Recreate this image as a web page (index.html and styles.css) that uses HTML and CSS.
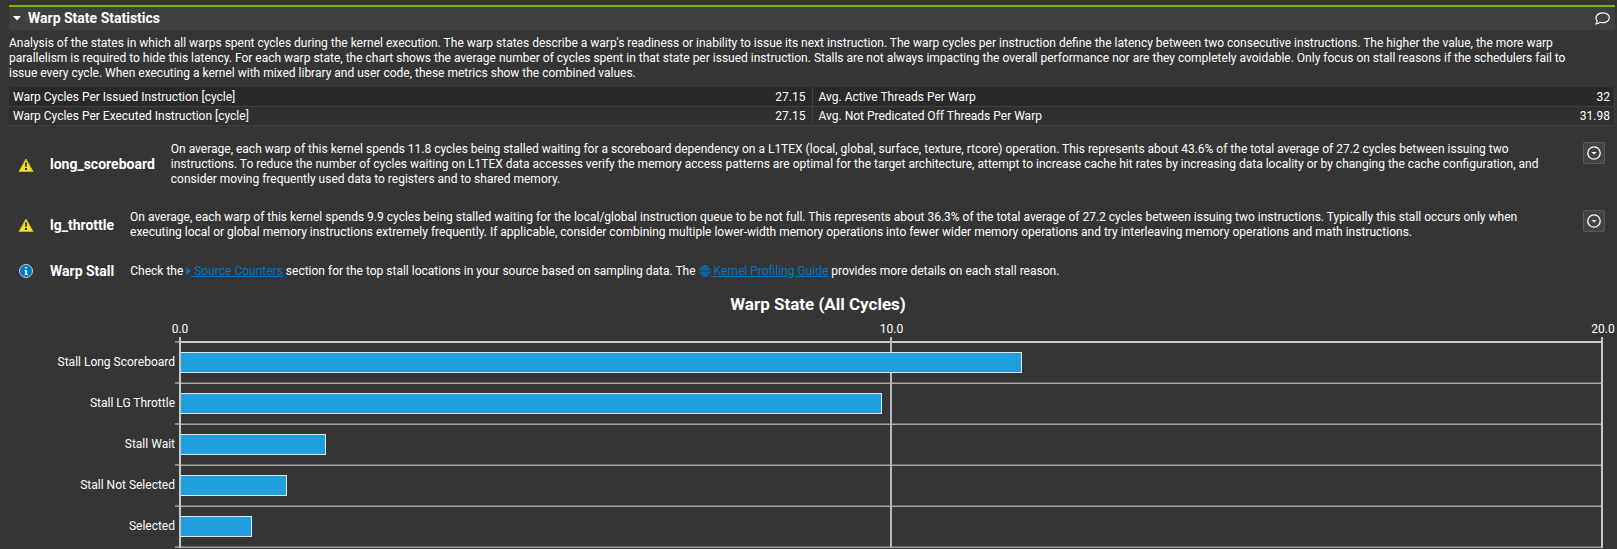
FILE: index.html
```html
<!DOCTYPE html>
<html lang="en">
<head>
<meta charset="utf-8">
<meta name="viewport" content="width=device-width, initial-scale=1">
<title>Warp State Statistics</title>
<link rel="stylesheet" href="styles.css">
</head>
<body>
<section class="section">
	<header class="section-head">
		<button class="toggle" aria-expanded="true">
			<svg width="8" height="5" viewBox="0 0 8 5"><path d="M0 0h8L4 4.5z" fill="#fff"/></svg>
			Warp State Statistics
		</button>
		<button class="comment" aria-label="Comments">
			<svg width="15" height="13" viewBox="0 0 15 13"><path d="M1 12 2.3 9.2C-.8 5.5 2 .8 7.800.8c3.7 0 6.5 2.1 6.5 4.9s-2.8 4.9-6.5 4.9c-1 0-1.9-.1-2.7-.4C4.1 11.3 2.6 12 1 12z" fill="none" stroke="#fff" stroke-width="1.2"/></svg>
		</button>
	</header>

	<p class="desc">Analysis of the states in which all warps spent cycles during the kernel execution. The warp states describe a warp's readiness or inability to issue its next instruction. The warp cycles per instruction define the latency between two consecutive instructions. The higher the value, the more warp parallelism is required to hide this latency. For each warp state, the chart shows the average number of cycles spent in that state per issued instruction. Stalls are not always impacting the overall performance nor are they completely avoidable. Only focus on stall reasons if the schedulers fail to issue every cycle. When executing a kernel with mixed library and user code, these metrics show the combined values.</p>

	<table class="metrics">
		<tr>
			<th>Warp Cycles Per Issued Instruction [cycle]</th><td>27.15</td>
			<th>Avg. Active Threads Per Warp</th><td>32</td>
		</tr>
		<tr>
			<th>Warp Cycles Per Executed Instruction [cycle]</th><td>27.15</td>
			<th>Avg. Not Predicated Off Threads Per Warp</th><td>31.98</td>
		</tr>
	</table>

	<div class="rules">
		<div class="rule">
			<svg class="mark" width="16" height="16" viewBox="0 0 16 16"><path d="M8 2 15 14.5H1z" fill="#f5e02f" stroke="#c4b128" stroke-linejoin="round"/><path d="M7 5.5h2L8.6 10H7.4zM7 11h2v2H7z" fill="#222"/></svg>
			<b>long_scoreboard</b>
			<p>On average, each warp of this kernel spends 11.8 cycles being stalled waiting for a scoreboard dependency on a L1TEX (local, global, surface, texture, rtcore) operation. This represents about 43.6% of the total average of 27.2 cycles between issuing two instructions. To reduce the number of cycles waiting on L1TEX data accesses verify the memory access patterns are optimal for the target architecture, attempt to increase cache hit rates by increasing data locality or by changing the cache configuration, and consider moving frequently used data to registers and to shared memory.</p>
			<button class="more" aria-label="Show details"><svg width="14" height="14" viewBox="0 0 14 14"><circle cx="7" cy="7" r="6.2" fill="none" stroke="#fff" stroke-width="1.3"/><path d="M4.5 6h5L7 8.5z" fill="#fff"/></svg></button>
		</div>
		<div class="rule">
			<svg class="mark" width="16" height="16" viewBox="0 0 16 16"><path d="M8 2 15 14.5H1z" fill="#f5e02f" stroke="#c4b128" stroke-linejoin="round"/><path d="M7 5.5h2L8.6 10H7.4zM7 11h2v2H7z" fill="#222"/></svg>
			<b>lg_throttle</b>
			<p>On average, each warp of this kernel spends 9.9 cycles being stalled waiting for the local/global instruction queue to be not full. This represents about 36.3% of the total average of 27.2 cycles between issuing two instructions. Typically this stall occurs only when executing local or global memory instructions extremely frequently. If applicable, consider combining multiple lower-width memory operations into fewer wider memory operations and try interleaving memory operations and math instructions.</p>
			<button class="more" aria-label="Show details"><svg width="14" height="14" viewBox="0 0 14 14"><circle cx="7" cy="7" r="6.2" fill="none" stroke="#fff" stroke-width="1.3"/><path d="M4.5 6h5L7 8.5z" fill="#fff"/></svg></button>
		</div>
		<div class="rule">
			<svg class="mark" width="16" height="16" viewBox="0 0 16 16"><circle cx="8" cy="8" r="6.5" fill="#0078d0" stroke="#ccc"/><path d="M7 4h2v1.5H7zM6.500 7H9v4h1v1H6.500v-1h.8V8h-.8z" fill="#fff"/></svg>
			<b>Warp Stall</b>
			<p>Check the <a href="#source"><svg width="5" height="8" viewBox="0 0 5 8"><path d="M.5 0v8l4-4z" fill="#0078c8"/></svg> Source Counters</a> section for the top stall locations in your source based on sampling data. The <a href="#guide"><svg class="globe" width="12" height="12" viewBox="0 0 12 12"><path d="M6 .8a5.2 5.2 0 1 0 0 10.4A5.2 5.2 0 1 0 6 .8zM6 .8c-3 2.5-3 7.900 0 10.400 3-2.500 3-7.900 0-10.400zM6 .8v10.400M1.300 4h9.400M1.300 8h9.400" fill="none" stroke="#0078c8"/></svg> Kernel Profiling Guide</a> provides more details on each stall reason.</p>
		</div>
	</div>

	<div class="chart">
		<h2>Warp State (All Cycles)</h2>
		<div class="scale"><span>0.0</span><span>10.0</span><span>20.0</span></div>
		<div class="row top"><span></span><i></i><div class="track"></div></div>
		<div class="row"><span>Stall Long Scoreboard</span><i></i><div class="track"><div class="bar" style="width:59.2%"></div></div></div>
		<div class="row"><span>Stall LG Throttle</span><i></i><div class="track"><div class="bar" style="width:49.35%"></div></div></div>
		<div class="row"><span>Stall Wait</span><i></i><div class="track"><div class="bar" style="width:10.2%"></div></div></div>
		<div class="row"><span>Stall Not Selected</span><i></i><div class="track"><div class="bar" style="width:7.45%"></div></div></div>
		<div class="row"><span>Selected</span><i></i><div class="track"><div class="bar" style="width:5%"></div></div></div>
	</div>
</section>
</body>
</html>
```
FILE: styles.css
```css
*{box-sizing: border-box;}
body{
	margin: 0;
	padding: 5px 2px 0 9px;
	font: 12px/15px Roboto, sans-serif;
	color: #fff;
	background: #353535;
}
p{margin: 0;}
button{
	padding: 0;
	border: 0;
	color: inherit;
	font: inherit;
	background: none;
	cursor: pointer;
}
svg{display: block;}

.section-head{
	display: flex;
	align-items: center;
	justify-content: space-between;
	height: 25px;
	padding: 0 5px 1px 4px;
	border-top: 2px solid #76b900;
	background: #3f3f3f;
}
.toggle{
	display: flex;
	align-items: center;
	gap: 7px;
	font-size: 14px;
	font-weight: bold;
}
.desc{
	padding: 6px 20px 6px 0;
}

.metrics{
	width: 100%;
	table-layout: fixed;
	border-collapse: collapse;
	border: 1px solid #2b2b2b;
	background: #2f2f2f;
}
.metrics tr:first-child{background: #292929;}
.metrics th,
.metrics td{
	height: 19px;
	padding: 0 4px 0 3px;
	border-bottom: 1px solid #404040;
}
.metrics th{
	width: 40%;
	text-align: left;
	font-weight: normal;
}
.metrics td{
	width: 10%;
	text-align: right;
	border-right: 1px solid #404040;
}
.metrics td:nth-child(2){padding-right: 6px;}
.metrics th:nth-child(3){padding-left: 6px;}

.rules{
	display: flex;
	flex-direction: column;
	gap: 23px;
	padding: 16px 10px 0 9px;
}
.rule{
	display: flex;
	align-items: center;
	gap: 16px;
}
.rule b{font-size: 14px;}
.rule p{
	flex: 1;
	padding-right: 16px;
}
.more{
	display: flex;
	align-items: center;
	align-self: flex-start;
	justify-content: center;
	width: 22px;
	height: 22px;
	border: 1px solid #5a5a5a;
	border-radius: 2px;
	background: #444;
}
a{color: #0078c8;}
a svg{display: inline-block;}
a .globe{vertical-align: -2px;}

.chart{
	overflow: hidden;
	padding-right: 12px;
}
.chart h2{
	margin: 15px 0 8px;
	padding-left: 24px;
	font-size: 17px;
	line-height: 20px;
	text-align: center;
}
.scale{
	display: flex;
	justify-content: space-between;
	margin: 0 -20px 0 151px;
}
.scale span{
	width: 40px;
	text-align: center;
}
.row{
	display: grid;
	grid-template-columns: 166px 4px 1fr;
	height: 41px;
}
.row span{
	padding-top: 12px;
	text-align: right;
}
.row i{border-bottom: 2px solid #888;}
.track{
	padding-top: 9px;
	border: solid #c8c8c8;
	border-width: 0 2px;
	background:
		linear-gradient(#b8b8b8, #b8b8b8) center / 2px 100% no-repeat,
		linear-gradient(#6c6c6c 50%, #a8a8a8 50%) bottom / 100% 2px no-repeat;
}
.bar{
	height: 21px;
	border: 1px solid #e0e8ee;
	border-left: 0;
	background: #209fdf;
}

/* short stub that carries the axis line */
.top{height: 6px;}
.top span,
.top .track{padding-top: 0;}
.top .track{
	background:
		linear-gradient(#b8b8b8, #b8b8b8) center / 2px 100% no-repeat,
		linear-gradient(#c8c8c8, #c8c8c8) bottom / 100% 2px no-repeat;
}
```
